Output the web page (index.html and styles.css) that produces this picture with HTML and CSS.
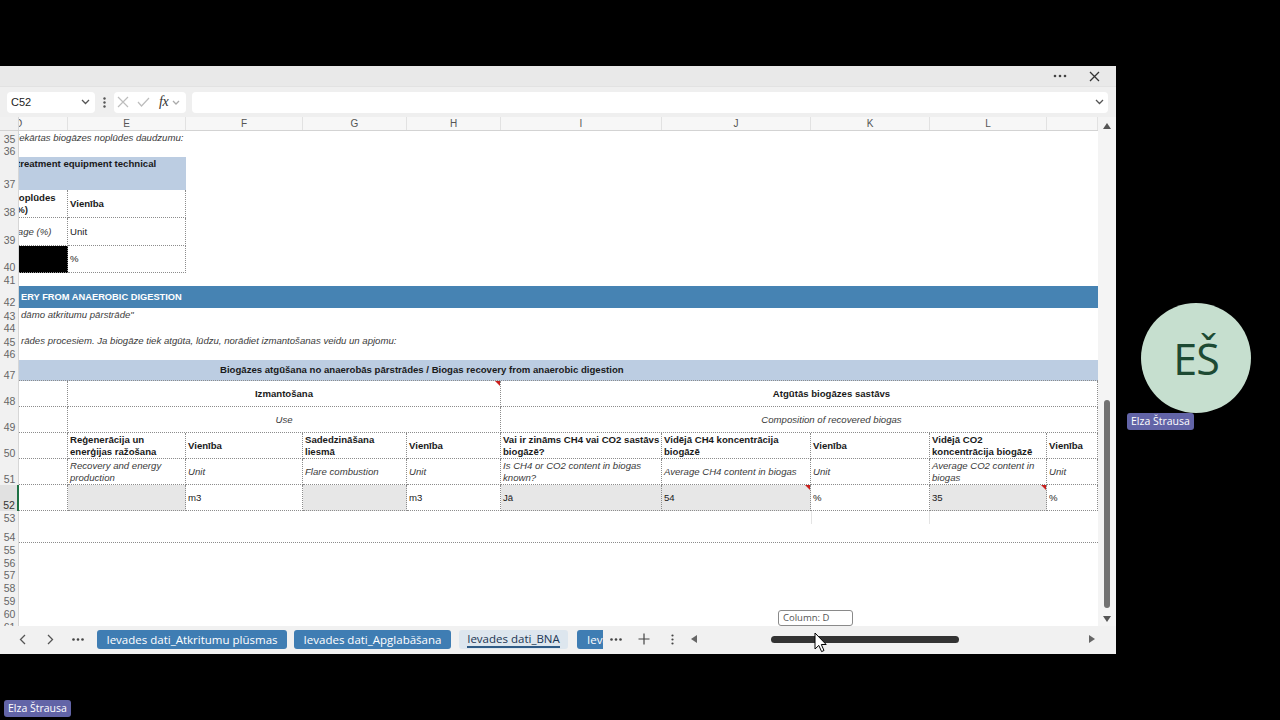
FILE: index.html
```html
<!DOCTYPE html>
<html lang="lv">
<head>
<meta charset="utf-8">
<title>Ievades dati_BNA</title>
<link rel="stylesheet" href="styles.css">
</head>
<body>
<div class="screen">
  <div class="excel">
    <div class="titlebar">
      <svg class="tb-more" width="14" height="4" viewBox="0 0 14 4"><circle cx="2" cy="2" r="1.3"/><circle cx="7" cy="2" r="1.3"/><circle cx="12" cy="2" r="1.3"/></svg>
      <svg class="tb-close" width="11" height="11" viewBox="0 0 11 11"><path d="M1 1L10 10M10 1L1 10"/></svg>
    </div>
    <div class="formulabar">
      <div class="namebox"><span>C52</span><svg class="chev" width="9" height="6" viewBox="0 0 9 6"><path d="M1 1L4.5 4.5L8 1"/></svg></div>
      <div class="fb-dots"><svg width="3" height="11" viewBox="0 0 3 11"><circle cx="1.5" cy="1.5" r="1.2"/><circle cx="1.5" cy="5.5" r="1.2"/><circle cx="1.5" cy="9.5" r="1.2"/></svg></div>
      <div class="fxbox">
        <svg class="fb-x" width="12" height="12" viewBox="0 0 12 12"><path d="M1 1L11 11M11 1L1 11"/></svg>
        <svg class="fb-check" width="13" height="10" viewBox="0 0 13 10"><path d="M1 5L4.5 9L12 1"/></svg>
        <span class="fx">fx</span>
        <svg class="chev light" width="8" height="5" viewBox="0 0 8 5"><path d="M1 1L4 4L7 1"/></svg>
      </div>
      <div class="fbinput"><svg class="chev" width="9" height="6" viewBox="0 0 9 6"><path d="M1 1L4.5 4.5L8 1"/></svg></div>
    </div>
    <div class="body">
      <div class="gridarea">
        <div class="colheads cols">
          <div class="corner"></div>
          <div class="ch chd"><span>D</span></div>
          <div class="ch">E</div>
          <div class="ch">F</div>
          <div class="ch">G</div>
          <div class="ch">H</div>
          <div class="ch">I</div>
          <div class="ch">J</div>
          <div class="ch">K</div>
          <div class="ch">L</div>
          <div class="ch"></div>
        </div>
        <div class="sheet">
          <div class="row cols h14"><div class="rh">35</div><div class="c all it"><span class="sh2">iekārtas biogāzes noplūdes daudzumu:</span></div></div>
          <div class="row cols h12"><div class="rh">36</div></div>
          <div class="row cols h33"><div class="rh">37</div><div class="c de band-light b top"><span class="sh4">treatment equipment technical</span></div></div>
          <div class="row cols h28"><div class="rh">38</div><div class="c tc b"><span class="sh5">noplūdes<br>(%)</span></div><div class="c tc b">Vienība</div></div>
          <div class="row cols h28"><div class="rh">39</div><div class="c tc it"><span class="sh20">Leakage (%)</span></div><div class="c tc">Unit</div></div>
          <div class="row cols h27"><div class="rh">40</div><div class="c tc black"></div><div class="c tc">%</div></div>
          <div class="row cols h13"><div class="rh">41</div></div>
          <div class="row cols h22"><div class="rh">42</div><div class="c all band-dark b caps">ERY FROM ANAEROBIC DIGESTION</div></div>
          <div class="row cols h14"><div class="rh">43</div><div class="c all it">dāmo atkritumu pārstrāde"</div></div>
          <div class="row cols h12"><div class="rh">44</div></div>
          <div class="row cols h14"><div class="rh">45</div><div class="c all it">rādes procesiem. Ja biogāze tiek atgūta, lūdzu, norādiet izmantošanas veidu un apjomu:</div></div>
          <div class="row cols h12"><div class="rh">46</div></div>
          <div class="row cols h21"><div class="rh">47</div><div class="c all band-light b dotb title47">Biogāzes atgūšana no anaerobās pārstrādes / Biogas recovery from anaerobic digestion</div></div>
          <div class="row cols h26"><div class="rh">48</div><div class="c tc"></div><div class="c tc b use-span center note">Izmantošana</div><div class="c tc b comp-span center comp">Atgūtās biogāzes sastāvs</div></div>
          <div class="row cols h26"><div class="rh">49</div><div class="c tc"></div><div class="c tc it use-span center">Use</div><div class="c tc it comp-span center comp">Composition of recovered biogas</div></div>
          <div class="row cols h26"><div class="rh">50</div>
            <div class="c tc"></div>
            <div class="c tc b">Reģenerācija un<br>enerģijas ražošana</div>
            <div class="c tc b">Vienība</div>
            <div class="c tc b">Sadedzināšana<br>liesmā</div>
            <div class="c tc b">Vienība</div>
            <div class="c tc b">Vai ir zināms CH4 vai CO2 sastāvs<br>biogāzē?</div>
            <div class="c tc b">Vidējā CH4 koncentrācija<br>biogāzē</div>
            <div class="c tc b">Vienība</div>
            <div class="c tc b">Vidējā CO2<br>koncentrācija biogāzē</div>
            <div class="c tc b">Vienība</div>
          </div>
          <div class="row cols h26"><div class="rh">51</div>
            <div class="c tc"></div>
            <div class="c tc it">Recovery and energy<br>production</div>
            <div class="c tc it">Unit</div>
            <div class="c tc it">Flare combustion</div>
            <div class="c tc it">Unit</div>
            <div class="c tc it">Is CH4 or CO2 content in biogas<br>known?</div>
            <div class="c tc it">Average CH4 content in biogas</div>
            <div class="c tc it">Unit</div>
            <div class="c tc it">Average CO2 content in<br>biogas</div>
            <div class="c tc it">Unit</div>
          </div>
          <div class="row cols h26"><div class="rh sel">52</div>
            <div class="c tc"></div>
            <div class="c tc fill"></div>
            <div class="c tc">m3</div>
            <div class="c tc fill"></div>
            <div class="c tc">m3</div>
            <div class="c tc fill">Jā</div>
            <div class="c tc fill note">54</div>
            <div class="c tc">%</div>
            <div class="c tc fill note">35</div>
            <div class="c tc">%</div>
          </div>
          <div class="row cols h13"><div class="rh">53</div><div class="c k53"></div></div>
          <div class="row cols h19"><div class="rh">54</div><div class="c all dotb"></div></div>
          <div class="row cols h13"><div class="rh">55</div></div>
          <div class="row cols h13"><div class="rh">56</div></div>
          <div class="row cols h12"><div class="rh">57</div></div>
          <div class="row cols h13"><div class="rh">58</div></div>
          <div class="row cols h13"><div class="rh">59</div></div>
          <div class="row cols h13"><div class="rh">60</div></div>
          <div class="row cols h13"><div class="rh">61</div></div>
        </div>
      </div>
      <div class="vscroll">
        <svg class="vs-up" width="8" height="6" viewBox="0 0 8 6"><path d="M0 6L4 0L8 6Z"/></svg>
        <div class="vs-thumb"></div>
        <svg class="vs-down" width="8" height="6" viewBox="0 0 8 6"><path d="M0 0L8 0L4 6Z"/></svg>
      </div>
    </div>
    <div class="tabbar">
      <div class="nav"><svg width="7" height="11" viewBox="0 0 7 11"><path d="M6 1L1.5 5.5L6 10"/></svg></div>
      <div class="nav"><svg width="7" height="11" viewBox="0 0 7 11"><path d="M1 1L5.5 5.5L1 10"/></svg></div>
      <div class="nav"><svg class="dots" width="12" height="3" viewBox="0 0 12 3"><circle cx="1.5" cy="1.5" r="1.3"/><circle cx="6" cy="1.5" r="1.3"/><circle cx="10.5" cy="1.5" r="1.3"/></svg></div>
      <div class="tab t1">Ievades dati_Atkritumu plūsmas</div>
      <div class="tab t2">Ievades dati_Apglabāšana</div>
      <div class="tab t3 active"><span>Ievades dati_BNA</span></div>
      <div class="tab t4">Ievades dati_Kompostēšana</div>
      <div class="tool w26"><svg class="dots" width="12" height="3" viewBox="0 0 12 3"><circle cx="1.5" cy="1.5" r="1.3"/><circle cx="6" cy="1.5" r="1.3"/><circle cx="10.5" cy="1.5" r="1.3"/></svg></div>
      <div class="tool w30"><svg width="12" height="12" viewBox="0 0 12 12"><path d="M6 0.5V11.5M0.5 6H11.5"/></svg></div>
      <div class="tool w26"><svg class="dots" width="3" height="11" viewBox="0 0 3 11"><circle cx="1.5" cy="1.5" r="1.1"/><circle cx="1.5" cy="5.5" r="1.1"/><circle cx="1.5" cy="9.5" r="1.1"/></svg></div>
      <div class="hscroll">
        <svg class="hs-left" width="6" height="8" viewBox="0 0 6 8"><path d="M6 0V8L0 4Z"/></svg>
        <div class="hs-thumb"></div>
        <svg class="hs-right" width="6" height="8" viewBox="0 0 6 8"><path d="M0 0V8L6 4Z"/></svg>
      </div>
    </div>
  </div>

  <div class="tooltip">Column: D</div>
  <svg class="cursor" width="13" height="21" viewBox="0 0 13 21"><path d="M1 1V17L4.8 13.4L7.6 19.6L10 18.5L7.3 12.5H12.2Z"/></svg>

  <div class="avatar">EŠ</div>
  <div class="nametag tag-avatar">Elza Štrausa</div>
  <div class="nametag tag-self">Elza Štrausa</div>
</div>
</body>
</html>
```

FILE: styles.css
```css
* { box-sizing: border-box; }
html, body { margin: 0; padding: 0; background: #000; }
body {
  width: 1280px;
  height: 720px;
  overflow: hidden;
  font-family: "Liberation Sans", Arial, sans-serif;
}
.screen {
  position: relative;
  width: 1280px;
  height: 720px;
  padding-top: 66px;
}
.excel {
  width: 1116px;
  height: 588px;
  background: #fff;
  display: flex;
  flex-direction: column;
  overflow: hidden;
}

/* title bar */
.titlebar {
  height: 20px;
  flex: none;
  background: #e9e9e9;
  display: flex;
  align-items: center;
  justify-content: flex-end;
  padding-right: 16px;
}
.tb-more { fill: #444; margin-right: 22px; }
.tb-close { stroke: #333; stroke-width: 1.3; fill: none; }

/* formula bar */
.formulabar {
  height: 31px;
  flex: none;
  background: #efefef;
  border-top: 1px solid #e2e2e2;
  display: flex;
  align-items: center;
  padding-left: 7px;
}
.namebox {
  width: 88px;
  height: 21px;
  background: #fff;
  border-radius: 4px;
  display: flex;
  align-items: center;
  justify-content: space-between;
  padding: 0 5px 0 4px;
  font-size: 11px;
  color: #222;
}
.chev { fill: none; stroke: #555; stroke-width: 1.3; }
.chev.light { stroke: #aaa; }
.fb-dots {
  width: 19px;
  display: flex;
  justify-content: center;
  fill: #555;
}
.fxbox {
  width: 72px;
  height: 21px;
  background: #fff;
  border-radius: 4px;
  display: flex;
  align-items: center;
  padding-left: 3px;
}
.fb-x { stroke: #bdbdbd; stroke-width: 1.2; fill: none; }
.fb-check { stroke: #bdbdbd; stroke-width: 1.2; fill: none; margin-left: 8px; }
.fx {
  font-family: "Liberation Serif", "Times New Roman", serif;
  font-style: italic;
  font-size: 14px;
  color: #333;
  margin-left: 9px;
  letter-spacing: -0.5px;
}
.fxbox .chev { margin-left: 4px; }
.fbinput {
  width: 916px;
  height: 21px;
  margin-left: 6px;
  background: #fff;
  border-radius: 4px;
  display: flex;
  align-items: center;
  justify-content: flex-end;
  padding-right: 4px;
}

/* body */
.body {
  height: 509px;
  flex: none;
  display: flex;
}
.gridarea {
  width: 1098px;
  display: flex;
  flex-direction: column;
}
.cols {
  display: grid;
  grid-template-columns: 19px 49px 118px 117px 104px 94px 161px 149px 119px 117px 51px;
}
.colheads {
  height: 14px;
  flex: none;
  background: #f7f7f7;
  border-bottom: 1px solid #d3d3d3;
}
.corner {
  background: #f1f1f1;
  border-right: 1px solid #d6d6d6;
}
.ch {
  font-size: 10px;
  color: #555;
  text-align: center;
  line-height: 13px;
  border-right: 1px solid #e2e2e2;
  overflow: hidden;
  white-space: nowrap;
}
.chd { text-align: left; }
.chd span { display: inline-block; margin-left: -4px; }

.sheet {
  height: 495px;
  overflow: hidden;
}
.row { overflow: hidden; }
.h12 { height: 12px; }
.h13 { height: 13px; }
.h14 { height: 14px; }
.h19 { height: 19px; }
.h21 { height: 21px; }
.h22 { height: 22px; }
.h26 { height: 26px; }
.h27 { height: 27px; }
.h28 { height: 28px; }
.h33 { height: 33px; }

.rh {
  grid-column: 1;
  background: #f1f1f1;
  border-right: 1px solid #d6d6d6;
  color: #666;
  font-size: 10.5px;
  line-height: 12px;
  display: flex;
  align-items: flex-end;
  justify-content: center;
  padding-left: 1px;
  overflow: hidden;
}
.rh.sel {
  background: #e1e1e1;
  border-right: 2px solid #1e7145;
  color: #333;
}

.c {
  position: relative;
  display: flex;
  align-items: center;
  padding: 0 2px;
  font-size: 9.6px;
  line-height: 12px;
  color: #1a1a1a;
  overflow: hidden;
  white-space: nowrap;
  min-width: 0;
}
.all { grid-column: 2 / -1; }
.de { grid-column: 2 / 4; }
.use-span { grid-column: 3 / 7; }
.comp-span { grid-column: 7 / 12; }
.center { justify-content: center; }
.comp { padding-left: 67px; }
.top { align-items: flex-start; padding-top: 1px; }
.b { font-weight: 700; }
.it { font-style: italic; color: #3a3a3a; }
.tc {
  border-right: 1px dotted #8c8c8c;
  border-bottom: 1px dotted #8c8c8c;
}
.dotb { border-bottom: 1px dotted #8c8c8c; }
.band-light { background: #bccde2; }
.band-dark { background: #4683b3; color: #fff; }
.caps { font-size: 9.3px; }
.title47 { padding-left: 201px; }
.black { background: #000; }
.fill { background: #e7e7e7; }
.note::after {
  content: "";
  position: absolute;
  top: 0;
  right: 0;
  width: 0;
  height: 0;
  border-top: 5px solid #c9211e;
  border-left: 5px solid transparent;
}
.k53 {
  grid-column: 9;
  border-left: 1px solid #e4e4e4;
  border-right: 1px solid #e4e4e4;
}
.sh2 { margin-left: -4px; }
.sh4 { margin-left: -4px; }
.sh5 { margin-left: -8px; }
.sh20 { margin-left: -24px; }

/* vertical scrollbar */
.vscroll {
  width: 18px;
  background: #f4f4f4;
  display: flex;
  flex-direction: column;
  align-items: center;
  padding-top: 6px;
}
.vs-up, .vs-down { fill: #555; flex: none; }
.vs-thumb {
  width: 6px;
  height: 208px;
  border-radius: 3px;
  background: #727272;
  margin-top: 271px;
  flex: none;
}
.vs-down { margin-top: 8px; }

/* tab bar */
.tabbar {
  height: 28px;
  flex: none;
  background: #f1f1f1;
  display: flex;
  align-items: center;
  padding-left: 8px;
  padding-bottom: 2px;
}
.nav {
  width: 28px;
  height: 20px;
  display: flex;
  align-items: center;
  justify-content: center;
}
.nav svg { fill: none; stroke: #555; stroke-width: 1.3; }
.nav svg.dots, .tool svg.dots { fill: #444; stroke: none; }
.tab {
  height: 19px;
  border-radius: 3px;
  background: #3f7db3;
  color: #fff;
  font-family: "Open Sans", "Noto Sans", sans-serif;
  font-size: 11.5px;
  display: flex;
  align-items: center;
  justify-content: center;
  white-space: nowrap;
  overflow: hidden;
  flex: none;
}
.t1 { width: 190px; margin-left: 5px; }
.t2 { width: 157px; margin-left: 7px; }
.t3 { width: 109px; margin-left: 8px; }
.t4 { width: 26px; margin-left: 9px; justify-content: flex-start; padding-left: 10px; border-radius: 3px 0 0 3px; }
.tab.active {
  background: #dde6ee;
  color: #1c3553;
}
.tab.active span {
  border-bottom: 2px solid #2f5b86;
  line-height: 14px;
  padding-top: 2px;
}
.tool {
  height: 20px;
  display: flex;
  align-items: center;
  justify-content: center;
  flex: none;
}
.tool svg { fill: none; stroke: #444; stroke-width: 1.2; }
.w26 { width: 26px; }
.w30 { width: 30px; }
.hscroll {
  width: 410px;
  height: 16px;
  margin-left: 3px;
  display: flex;
  align-items: center;
  padding-left: 3px;
}
.hs-left, .hs-right { fill: #666; flex: none; }
.hs-thumb {
  width: 188px;
  height: 7px;
  border-radius: 4px;
  background: #333;
  margin-left: 74px;
  flex: none;
}
.hs-right { margin-left: 130px; }

/* overlays */
.tooltip {
  position: absolute;
  left: 778px;
  top: 610px;
  width: 75px;
  height: 16px;
  background: #fff;
  border: 1px solid #8a8a8a;
  border-radius: 3px;
  font-family: "Open Sans", "Noto Sans", sans-serif;
  font-size: 9.5px;
  line-height: 14px;
  color: #555;
  padding-left: 4px;
}
.cursor {
  position: absolute;
  left: 814px;
  top: 632px;
  fill: #fff;
  stroke: #000;
  stroke-width: 1;
  stroke-linejoin: round;
}
.avatar {
  position: absolute;
  left: 1141px;
  top: 303px;
  width: 110px;
  height: 110px;
  border-radius: 50%;
  background: #c6dfcf;
  color: #1d4a33;
  font-family: "Open Sans", "Noto Sans", sans-serif;
  font-size: 43px;
  font-weight: 500;
  display: flex;
  align-items: center;
  justify-content: center;
  letter-spacing: -1px;
}
.nametag {
  position: absolute;
  height: 17px;
  padding: 0 4px;
  border-radius: 3px;
  background: #6264a7;
  color: #fff;
  font-family: "Open Sans", "Noto Sans", sans-serif;
  font-size: 10.5px;
  line-height: 17px;
  white-space: nowrap;
}
.tag-avatar { left: 1127px; top: 413px; }
.tag-self { left: 4px; top: 700px; }
```
